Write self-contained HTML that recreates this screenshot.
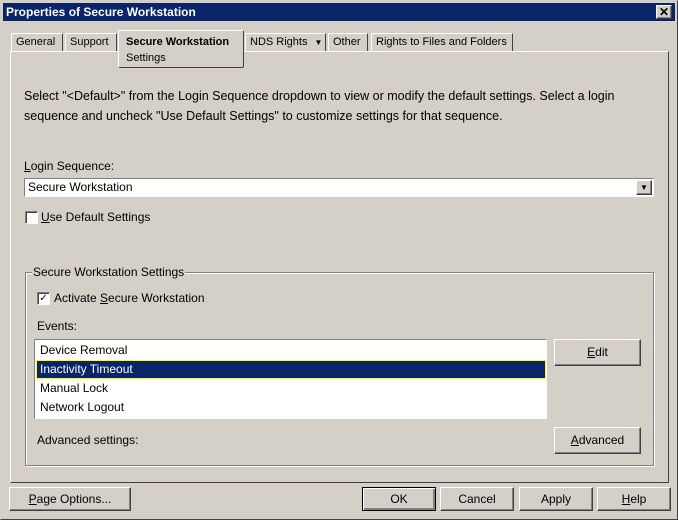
<!DOCTYPE html><html><head><style>
body{margin:0;width:678px;height:520px;background:#d4d0c8;font-family:"Liberation Sans",sans-serif;font-size:12px;color:#000;position:relative;overflow:hidden}
.a{position:absolute;white-space:nowrap}
.btn{position:absolute;background:#d4d0c8;border:1px solid;border-color:#fff #404040 #404040 #fff;box-shadow:inset -1px -1px #808080;text-align:center;box-sizing:border-box;line-height:22px}
.tab{position:absolute;top:33px;height:18px;border:1px solid;border-bottom:none;border-color:#fff #404040 #404040 #fff;line-height:17px;padding:0 4px;box-sizing:border-box;font-size:11px;white-space:nowrap;overflow:hidden}
.cb{position:absolute;width:11px;height:11px;background:#fff;border:1px solid;border-color:#808080 #fff #fff #808080;box-shadow:inset 1px 1px #404040}
u{text-decoration:underline}
</style></head><body>
<div class="a" style="left:0;top:0;width:676px;height:518px;border:1px solid;border-color:#d4d0c8 #404040 #404040 #d4d0c8"></div>
<div class="a" style="left:3px;top:3px;width:672px;height:18px;background:#0a246a;color:#fff;font-weight:bold;font-size:12px;line-height:18px;padding-left:3px;box-sizing:border-box">Properties of Secure Workstation</div>
<div class="btn" style="left:656px;top:5px;width:16px;height:14px;line-height:12px;font-size:12px;font-weight:bold">✕</div>
<div class="a" style="left:10px;top:51px;width:659px;height:432px;border:1px solid;border-color:#fff #404040 #404040 #fff;box-sizing:border-box"></div>
<div class="tab" style="left:11px;width:52px">General</div>
<div class="tab" style="left:65px;width:52px">Support</div>
<div class="tab" style="left:245px;width:81px">NDS Rights <span style="font-size:8px;margin-left:4px">&#9660;</span></div>
<div class="tab" style="left:328px;width:40px">Other</div>
<div class="tab" style="left:371px;width:142px">Rights to Files and Folders</div>
<div class="a" style="left:118px;top:30px;width:126px;height:38px;background:#d4d0c8;border:1px solid;border-color:#fff #404040 #404040 #fff;box-sizing:border-box;border-radius:2px;font-size:11px;padding:3px 0 0 7px;line-height:16px"><b>Secure Workstation</b><br>Settings</div>
<div class="a" style="left:24px;top:86px;width:620px;font-size:12.5px;line-height:20px;white-space:normal">Select "&lt;Default&gt;" from the Login Sequence dropdown to view or modify the default settings. Select a login sequence and uncheck "Use Default Settings" to customize settings for that sequence.</div>
<div class="a" style="left:24px;top:159px"><u>L</u>ogin Sequence:</div>
<div class="a" style="left:24px;top:178px;width:630px;height:19px;background:#fff;border:1px solid;border-color:#808080 #fff #fff #808080;box-sizing:border-box;line-height:17px;padding-left:3px">Secure Workstation</div>
<div class="btn" style="left:636px;top:180px;width:16px;height:15px;line-height:13px;font-size:8px">&#9660;</div>
<div class="cb" style="left:25px;top:211px"></div>
<div class="a" style="left:41px;top:210px"><u>U</u>se Default Settings</div>
<div class="a" style="left:25px;top:272px;width:627px;height:192px;border:1px solid #808080;box-shadow:1px 1px #fff,inset 1px 1px #fff"></div>
<div class="a" style="left:32px;top:265px;background:#d4d0c8;padding:0 1px">Secure Workstation Settings</div>
<div class="cb" style="left:37px;top:292px;font-size:10px;line-height:11px;text-align:center">✓</div>
<div class="a" style="left:54px;top:291px">Activate <u>S</u>ecure Workstation</div>
<div class="a" style="left:37px;top:319px">Events:</div>
<div class="a" style="left:34px;top:339px;width:513px;height:80px;background:#fff;border:1px solid;border-color:#808080 #fff #fff #808080;box-sizing:border-box"></div>
<div class="a" style="left:40px;top:343px">Device Removal</div>
<div class="a" style="left:36px;top:360px;width:510px;height:19px;background:#0a246a;border:1px solid #ff0;box-sizing:border-box;color:#fff;padding-left:3px;line-height:17px">Inactivity Timeout</div>
<div class="a" style="left:40px;top:381px">Manual Lock</div>
<div class="a" style="left:40px;top:400px">Network Logout</div>
<div class="a" style="left:37px;top:433px">Advanced settings:</div>
<div class="btn" style="left:554px;top:339px;width:87px;height:27px;line-height:25px"><u>E</u>dit</div>
<div class="btn" style="left:554px;top:427px;width:87px;height:27px;line-height:25px"><u>A</u>dvanced</div>
<div class="btn" style="left:9px;top:487px;width:122px;height:24px"><u>P</u>age Options...</div>
<div class="btn" style="left:362px;top:487px;width:74px;height:24px;border-color:#000;box-shadow:inset 1px 1px #fff,inset -2px -2px #808080">OK</div>
<div class="btn" style="left:440px;top:487px;width:74px;height:24px">Cancel</div>
<div class="btn" style="left:519px;top:487px;width:74px;height:24px">Apply</div>
<div class="btn" style="left:597px;top:487px;width:74px;height:24px"><u>H</u>elp</div>
</body></html>
